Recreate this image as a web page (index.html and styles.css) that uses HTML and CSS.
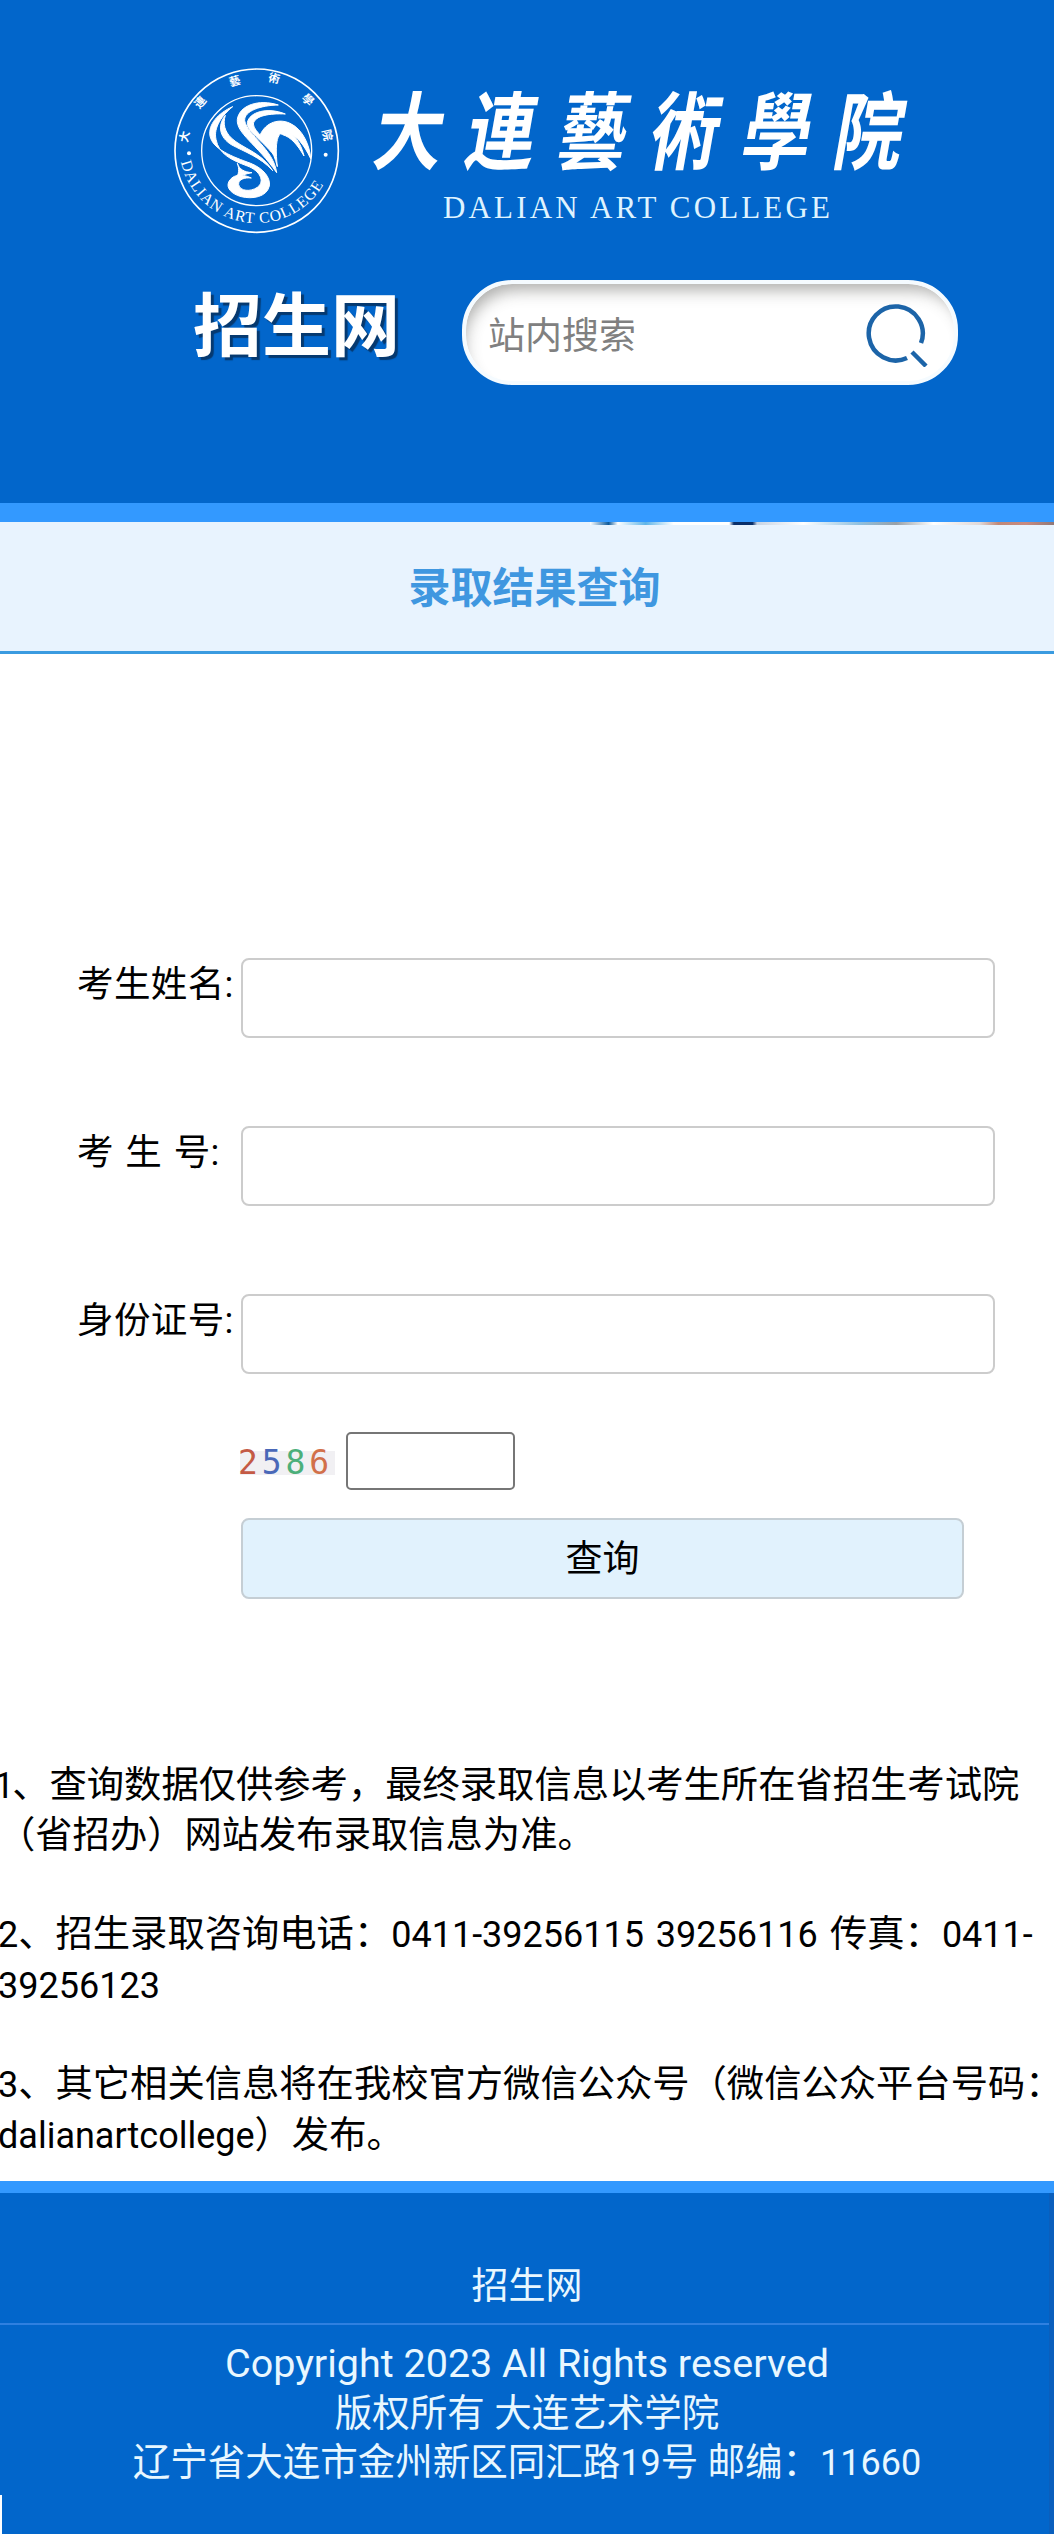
FILE: index.html
```html
<!DOCTYPE html>
<html lang="zh-CN">
<head>
<meta charset="utf-8">
<title>录取结果查询</title>
<link rel="stylesheet" href="styles.css">
</head>
<body>
<header class="site-header">
  <div class="brand">
    <svg class="seal" viewBox="0 0 600 600">
      <circle class="ring-outer" cx="290" cy="302" r="245"/>
      <circle class="ring-inner" cx="290" cy="302" r="165"/>
      <circle class="dot" cx="87" cy="310" r="6"/>
      <circle class="dot" cx="497" cy="314" r="6"/>
      <g class="seal-cn">
        <text transform="translate(85 262) rotate(-78)">大</text>
        <text transform="translate(130 165) rotate(-49)">連</text>
        <text transform="translate(228 105) rotate(-16)">藝</text>
        <text transform="translate(340 97) rotate(13)">術</text>
        <text transform="translate(435 158) rotate(44)">學</text>
        <text transform="translate(490 258) rotate(77)">院</text>
      </g>
      <path id="sealArc" class="no-paint" d="M62 330 A232 232 0 0 0 518 330"/>
      <text class="seal-en"><textPath href="#sealArc" startOffset="6">DALIAN ART COLLEGE</textPath></text>
      <g class="plume">
        <path d="M218 170 C172 190 144 225 150 258 C158 298 218 320 272 340 C312 356 332 384 328 408 C320 442 276 448 244 440 C214 432 198 414 206 396 C216 376 240 368 274 384 C254 382 234 388 236 404 C240 424 272 426 292 412 C316 394 300 362 262 348 C214 330 176 312 168 268 C160 232 186 196 218 170Z"/>
        <path d="M196 196 C172 226 178 262 214 284 C254 306 300 320 338 362 C304 306 248 296 214 264 C194 244 188 222 196 196Z"/>
        <path d="M355 165 C296 146 238 166 232 208 C228 250 290 282 350 368 C340 296 262 256 254 212 C252 182 304 166 355 165Z"/>
        <path d="M376 192 C322 170 268 186 262 218 C260 244 304 268 342 316 C326 268 282 248 280 222 C284 196 330 190 376 192Z"/>
        <path d="M298 262 C310 222 352 202 390 220 C430 238 450 290 452 326 C432 284 410 256 382 248 C358 242 342 258 352 350 C340 298 318 278 298 262Z"/>
        <path d="M350 246 C384 228 420 266 432 318 C412 284 394 262 368 254 C360 250 356 248 350 246Z"/>
        <path d="M232 340 C238 358 252 366 276 368 C256 372 238 376 226 388 C238 372 238 356 232 340Z"/>
      </g>
    </svg>
    <div class="wordmark">
      <div class="wordmark-cn">大連藝術學院</div>
      <div class="wordmark-en">DALIAN ART COLLEGE</div>
    </div>
  </div>
  <div class="tools">
    <div class="site-name">招生网</div>
    <div class="search">
      <span class="search-hint">站内搜索</span>
      <svg class="search-icon" viewBox="0 0 64 64">
        <path d="M41 55 A27 27 0 1 1 55 40"/>
        <path d="M46 49 L60 63"/>
      </svg>
    </div>
  </div>
</header>
<div class="band"></div>
<section class="title-bar">
  <div class="sliver"></div>
  <h1>录取结果查询</h1>
</section>
<main>
  <form class="query">
    <div class="row"><label>考生姓名:</label><input class="field" type="text"></div>
    <div class="row"><label class="spaced">考 生 号:</label><input class="field" type="text"></div>
    <div class="row"><label>身份证号:</label><input class="field" type="text"></div>
    <div class="captcha-row">
      <div class="captcha"><span class="c1">2</span><span class="c2">5</span><span class="c3">8</span><span class="c4">6</span></div>
      <input class="captcha-input" type="text">
    </div>
    <button class="submit" type="button">查询</button>
  </form>
  <div class="notes">
    <p><span class="num one">1</span>、查询数据仅供参考，最终录取信息以考生所在省招生考试院<br>（省招办）网站发布录取信息为准。</p>
    <p class="wide"><span class="num">2</span>、招生录取咨询电话：<span class="num">0411-39256115 39256116</span> 传真：<span class="num">0411-<br>39256123</span></p>
    <p><span class="num">3</span>、其它相关信息将在我校官方微信公众号（微信公众平台号码<span class="half">：</span><br><span class="num">dalianartcollege</span>）发布。</p>
  </div>
</main>
<footer class="site-footer">
  <div class="footer-name">招生网</div>
  <div class="footer-info">
    <div class="copyright">Copyright 2023 All Rights reserved</div>
    <div>版权所有 大连艺术学院</div>
    <div>辽宁省大连市金州新区同汇路<span class="num">19</span>号 邮编：<span class="num">11660</span></div>
  </div>
</footer>
</body>
</html>
```
FILE: styles.css
```css
* { box-sizing: border-box; }
html, body { margin: 0; padding: 0; }
body {
  width: 1054px;
  height: 2534px;
  overflow: hidden;
  background: #fff;
  color: #000;
  font-family: Roboto, "Noto Sans CJK SC", sans-serif;
}

.site-header { height: 503px; background: #0266cb; padding-top: 50px; }
.brand { display: flex; height: 200px; padding-left: 160px; }
.seal { width: 200px; height: 200px; flex: none; }
.ring-outer { fill: none; stroke: #fff; stroke-width: 5; }
.ring-inner { fill: none; stroke: #fff; stroke-width: 4; }
.dot { fill: #fff; }
.no-paint { fill: none; }
.seal-cn text { fill: #fff; font: 700 34px "Noto Sans CJK TC", sans-serif; text-anchor: middle; }
.seal-en { fill: #fff; font: 400 47px "Liberation Serif", serif; letter-spacing: 3px; }
.plume path { fill: #fff; stroke: #fff; stroke-width: 3; stroke-linejoin: round; }

.wordmark { margin-left: 17px; padding-top: 26px; }
.wordmark-cn {
  width: 617px;
  font: 700 80px/100px "Noto Sans CJK TC", sans-serif;
  letter-spacing: 27px;
  color: #fff;
  white-space: nowrap;
  transform: skewX(-10deg) scale(.86, 1.06);
  transform-origin: 0 50%;
}
.wordmark-en {
  margin: 14px 0 0 66px;
  font: 400 31px/36px "Liberation Serif", serif;
  letter-spacing: 3.15px;
  color: #dff3ff;
  white-space: nowrap;
}

.tools { display: flex; align-items: flex-start; margin-top: 30px; padding-left: 193px; }
.site-name {
  width: 269px;
  font: 700 69px/82px "Noto Sans CJK SC", sans-serif;
  color: #fff;
  text-shadow: 3px 3px 1px #06396f;
}
.search {
  display: flex;
  align-items: center;
  justify-content: space-between;
  width: 496px;
  height: 105px;
  padding: 0 24px 0 22px;
  border: 4px solid #f5fbff;
  border-radius: 50px;
  background: #fff;
  box-shadow: inset 6px 14px 16px -8px rgba(60, 60, 55, .42);
}
.search-hint { font-size: 37px; color: #808080; }
.search-icon { width: 64px; height: 64px; margin-top: 4px; fill: none; stroke: #1c64a8; stroke-width: 4.5; }

.band { height: 19px; background: #3399ff; }

.title-bar { position: relative; height: 132px; background: #e8f3fe; border-bottom: 3px solid #3a9be0; }
.title-bar h1 {
  margin: 0;
  padding-left: 15px;
  text-align: center;
  font: 700 42px/126px "Noto Sans CJK SC", sans-serif;
  color: #3f97e0;
}
.sliver {
  position: absolute;
  top: 0;
  right: 0;
  width: 464px;
  height: 3px;
  background: linear-gradient(90deg, #fff 0, #0d5a9c 4%, #fff 6%, #5fb4e8 12%, #fff 18%, #fff 30%, #0a2f6a 31%, #0a2f6a 35%, #c8d4e4 36%, #fff 46%, #8fc0e0 58%, #98a0a8 66%, #fff 74%, #e0d8d8 84%, #c08878 88%, #c88a80 94%, #907878 100%);
}

.query { padding: 304px 0 0 77px; }
.row { display: flex; align-items: flex-start; height: 80px; margin-bottom: 88px; }
.row label { width: 164px; padding-top: 2px; font-size: 36.5px; line-height: 50px; letter-spacing: .4px; white-space: pre; }
.row label.spaced { word-spacing: 2px; }
.field { width: 754px; height: 80px; border: 2px solid #ccc; border-radius: 8px; background: #fff; }

.captcha-row { display: flex; align-items: center; gap: 11px; height: 58px; margin: -30px 0 28px 163px; }
.captcha {
  width: 95px;
  height: 24px;
  margin-top: 3px;
  background: #f1f0f3;
  font: 400 33px/24px "DejaVu Sans Mono", monospace;
  letter-spacing: 3.9px;
  text-indent: -2px;
  white-space: nowrap;
}
.c1 { color: #c45a45; }
.c2 { color: #4a68b8; }
.c3 { color: #4caf7a; }
.c4 { color: #d2704a; }
.captcha-input { width: 169px; height: 58px; border: 2px solid #767676; border-radius: 5px; background: #fff; }

.submit {
  display: block;
  width: 723px;
  height: 81px;
  margin-left: 164px;
  padding: 0 0 5px;
  border: 2px solid #c5ced4;
  border-radius: 8px;
  background: #e1f2fd;
  font-family: Roboto, "Noto Sans CJK SC", sans-serif;
  font-size: 37px;
  color: #000;
}

.notes { margin: 162px 0 0 -2px; height: 420px; font-size: 37.3px; line-height: 49.4px; white-space: nowrap; }
.notes p { margin: 0 0 49.4px; }
.notes .wide { word-spacing: 3px; }
.half { font-feature-settings: "halt"; }
.num { font-size: 36px; }
.num.one { margin-left: -4px; letter-spacing: -2px; }

.site-footer { position: relative; height: 354px; border-top: 12px solid #3399ff; background: #0266cb; color: #e8f7ff; text-align: center; }
.site-footer::before { content: ""; position: absolute; top: 302px; left: 0; width: 2px; height: 40px; background: #fff; }
.site-footer::after { content: ""; position: absolute; top: 0; right: 0; width: 5px; height: 342px; background: #0a5fbd; }
.footer-name { height: 132px; border-bottom: 2px solid #2f80e0; font-size: 37px; line-height: 188px; }
.footer-info { padding-top: 14px; font-size: 37.5px; line-height: 49.5px; }
.copyright { font-size: 39.5px; }
```
